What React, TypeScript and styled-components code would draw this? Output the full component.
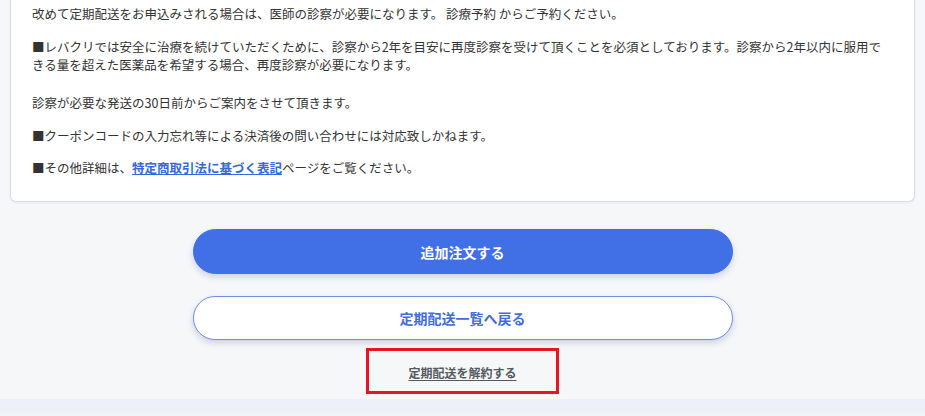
import React from 'react';
import styled, { createGlobalStyle } from 'styled-components';

const GlobalStyle = createGlobalStyle`
  html, body {
    margin: 0;
    padding: 0;
    background-color: #f6f7f9;
    font-family: "Noto Sans CJK JP", "Noto Sans", sans-serif;
  }
`;

const Page = styled.div`
  width: 925px;
  height: 416px;
  overflow: hidden;
  display: flex;
  flex-direction: column;
`;

const NoticeCard = styled.div`
  margin: 0 10px;
  padding: 5px 22px 24px 21px;
  background-color: #ffffff;
  border: 1px solid #d6dcee;
  border-top: none;
  border-radius: 0 0 6px 6px;
  box-shadow: 0 1px 3px rgba(90, 100, 150, 0.08);
`;

const Paragraph = styled.p<{ $gap?: number }>`
  margin: ${(p) => p.$gap ?? 15}px 0 0;
  font-size: 12.5px;
  line-height: 18px;
  color: #333333;

  &:first-child {
    margin-top: 0;
  }
`;

const InlineLink = styled.a`
  color: #3468dc;
  font-weight: 700;
  text-decoration: underline;
`;

const Actions = styled.div`
  display: flex;
  flex-direction: column;
  align-items: center;
  padding-top: 27px;
`;

const PillButton = styled.button<{ $variant: 'primary' | 'outline' }>`
  width: 540px;
  height: ${(p) => (p.$variant === 'primary' ? 45 : 44)}px;
  margin-bottom: ${(p) => (p.$variant === 'primary' ? 22 : 8)}px;
  border-radius: 999px;
  border: 1px solid ${(p) => (p.$variant === 'primary' ? '#416fe6' : '#6d8ee8')};
  background-color: ${(p) => (p.$variant === 'primary' ? '#416fe6' : '#ffffff')};
  color: ${(p) => (p.$variant === 'primary' ? '#ffffff' : '#3f6de0')};
  font-family: inherit;
  font-size: 14px;
  font-weight: 700;
  box-shadow: 0 3px 6px rgba(60, 70, 140, 0.22);
  cursor: pointer;
`;

const Highlight = styled.div`
  box-sizing: border-box;
  width: 193px;
  height: 46px;
  border: 3px solid #e8141f;
  display: flex;
  align-items: center;
  justify-content: center;
`;

const CancelLink = styled.a`
  font-size: 12px;
  font-weight: 700;
  color: #555a60;
  text-decoration: underline;
  text-underline-offset: 2px;
  margin-top: 2px;
`;

const Spacer = styled.div`
  flex: 1;
`;

const FooterBand = styled.div`
  height: 9px;
  background-color: #edf0f8;
`;

const FooterShade = styled.div`
  height: 8px;
  background: linear-gradient(#eceef5, #f4f5f8);
`;

const App: React.FC = () => {
  return (
    <>
      <GlobalStyle />
      <Page>
        <NoticeCard>
          <Paragraph>
            改めて定期配送をお申込みされる場合は、医師の診察が必要になります。 診療予約 からご予約ください。
          </Paragraph>
          <Paragraph>
            ■レバクリでは安全に治療を続けていただくために、診察から2年を目安に再度診察を受けて頂くことを必須としております。診察から2年以内に服用できる量を超えた医薬品を希望する場合、再度診察が必要になります。
          </Paragraph>
          <Paragraph $gap={20}>診察が必要な発送の30日前からご案内をさせて頂きます。</Paragraph>
          <Paragraph>■クーポンコードの入力忘れ等による決済後の問い合わせには対応致しかねます。</Paragraph>
          <Paragraph $gap={14}>
            ■その他詳細は、<InlineLink href="#">特定商取引法に基づく表記</InlineLink>ページをご覧ください。
          </Paragraph>
        </NoticeCard>
        <Actions>
          <PillButton $variant="primary">追加注文する</PillButton>
          <PillButton $variant="outline">定期配送一覧へ戻る</PillButton>
          <Highlight>
            <CancelLink href="#">定期配送を解約する</CancelLink>
          </Highlight>
        </Actions>
        <Spacer />
        <FooterBand />
        <FooterShade />
      </Page>
    </>
  );
};

export default App;
